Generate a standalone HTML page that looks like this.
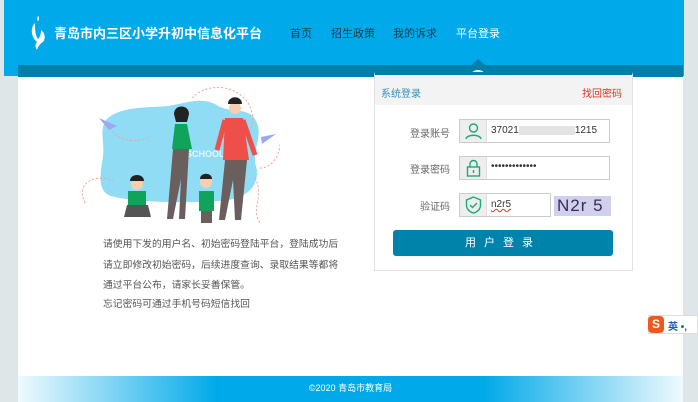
<!DOCTYPE html><html><head><meta charset="utf-8"><style>
*{margin:0;padding:0;box-sizing:border-box}
body{width:698px;height:402px;overflow:hidden;background:#dfe6e8;font-family:"Liberation Sans","Noto Sans CJK SC",sans-serif;position:relative}
.a{position:absolute}
.top{left:4px;top:0;width:680px;height:76px;background:#00a9e9}
.strip{left:18px;top:65px;width:665px;height:12px;background:#0080a8}
.main{left:18px;top:77px;width:665px;height:325px;background:#fff}
.nav{top:25px;font-size:11px;color:#1b3c4c}
.lb{font-size:10px;color:#666;width:60px;text-align:right;left:390px}
.inp{left:459px;height:24px;border:1px solid #ccc;background:#fff}
.ic{position:absolute;left:0;top:0;width:27px;height:22px;background:#eee;border-right:1px solid #e0e0e0}
.txt{font-size:9.8px;color:#555;left:103px;line-height:20px}
</style></head><body>
<div class="a top"></div>
<div class="a strip"></div>
<div class="a main"></div>
<svg class="a" style="left:30px;top:15px" width="16" height="36" viewBox="0 0 16 36"><path d="M8 1c-1 2-1 4 0 5c1-1 2-3 0-5z M5 8C0 13 1 22 7 27c-2 2-2 5 0 8c1-4 3-6 6-8c3-4 2-9-2-12c0 4-1 7-3 9c-3-4-3-10-3-16z" fill="#fff"/></svg>
<div class="a" style="left:54px;top:23px;font-size:13px;font-weight:bold;color:#fff">青岛市内三区小学升初中信息化平台</div>
<div class="a nav" style="left:290px">首页</div>
<div class="a nav" style="left:331px">招生政策</div>
<div class="a nav" style="left:393px">我的诉求</div>
<div class="a nav" style="left:456px;color:#fff">平台登录</div>
<div class="a" style="left:470px;top:59px;width:0;height:0;border-left:8px solid transparent;border-right:8px solid transparent;border-bottom:7px solid #0080a8"></div>
<div class="a" style="left:469px;top:70px;width:18px;height:14px;border-radius:9px 9px 0 0;background:#fff"></div>
<svg class="a" style="left:80px;top:78px" width="200" height="145" viewBox="0 0 200 145">
<path d="M28 40c15-12 40-10 60 -12c20-3 35-10 50 0c15 8 30 0 38 15c8 15 -5 30 0 45c5 20 -10 35 -40 35c-30 2 -80 2 -105 -5c-15-5 -10-25 -8-40c2-15 -5-28 5-38z" fill="#8fdcf4"/>
<text x="106" y="79" font-size="9" font-weight="bold" fill="#e6f7fd" font-family="Liberation Sans">SCHOOL</text>
<path d="M5 125c-10-20 10-30 28-22M112 20c20-20 55-10 60 15c3 15-5 25-15 30M175 100c10 20 -5 30 5 45M30 50c10 15 30 15 40 8M180 90c10 0 20-10 20-25" stroke="#f5a090" stroke-dasharray="2 2" fill="none"/>
<path d="M19 40l18 8l-8 4z M196 56l-14 10l-1-7z" fill="#9da8f2"/>
<g><path d="M95 46h12l5 25h-20z" fill="#10a35a"/><circle cx="102" cy="38" r="6" fill="#f6cfb0"/><path d="M94 36c0-10 15-10 15 0l-2 8h-11z" fill="#222"/><path d="M93 71h16l-4 70h-6l2-40l-8 40h-6z" fill="#6a5f5c"/></g>
<g><path d="M145 40h18l6 42h-26z" fill="#ef4f4a"/><path d="M145 42l-8 30M163 42l12 35" stroke="#ef4f4a" stroke-width="5"/><circle cx="155" cy="30" r="6" fill="#f6cfb0"/><path d="M148 26c0-9 14-9 14 0h-14z" fill="#222"/><path d="M145 82h22l-6 60h-6l-2-40l-8 40h-6z" fill="#6a5f5c"/></g>
<g><rect x="48" y="113" width="18" height="14" fill="#10a35a"/><circle cx="57" cy="106" r="6" fill="#f6cfb0"/><path d="M50 103c0-8 14-8 14 0z" fill="#222"/><path d="M47 127h21l3 12h-27z" fill="#555"/></g>
<g><rect x="119" y="113" width="15" height="20" fill="#10a35a"/><circle cx="126" cy="104" r="6" fill="#f6cfb0"/><path d="M120 101c0-7 12-7 12 0z" fill="#222"/><rect x="121" y="133" width="11" height="12" fill="#6a5f5c"/></g>
</svg>
<div class="a txt" style="top:235px">请使用下发的用户名、初始密码登陆平台，登陆成功后</div>
<div class="a txt" style="top:256px">请立即修改初始密码，后续进度查询、录取结果等都将</div>
<div class="a txt" style="top:276px">通过平台公布，请家长妥善保管。</div>
<div class="a txt" style="top:295px">忘记密码可通过手机号码短信找回</div>
<div class="a" style="left:374px;top:72px;width:259px;height:199px;border:1px solid #e3e3e3;border-top:3px solid #0080a8;background:#fff"></div>
<div class="a" style="left:375px;top:75px;width:257px;height:30px;background:#f3f3f3"></div>
<div class="a" style="left:381px;top:85px;font-size:10px;color:#3590b5">系统登录</div>
<div class="a" style="left:582px;top:85px;font-size:10px;color:#e0301e">找回密码</div>
<div class="a lb" style="top:125px">登录账号</div>
<div class="a lb" style="top:161px">登录密码</div>
<div class="a lb" style="top:198px">验证码</div>
<div class="a inp" style="top:119px;width:151px"><div class="ic"><svg width="27" height="22"><circle cx="13.5" cy="8" r="4" fill="none" stroke="#1fa97a" stroke-width="1.4"/><path d="M6 19c1-5 14-5 15 0" fill="none" stroke="#1fa97a" stroke-width="1.4"/></svg></div><span class="a" style="left:31px;top:5px;font-size:10px;color:#333">37021<span style="display:inline-block;width:56px;height:9px;background:#e4e4e4;vertical-align:middle"></span>1215</span></div>
<div class="a inp" style="top:156px;width:151px"><div class="ic"><svg width="27" height="22"><path d="M10 10V7a3.5 3.5 0 0 1 7 0v3" fill="none" stroke="#1fa97a" stroke-width="1.4"/><rect x="7.5" y="10" width="12" height="9" fill="none" stroke="#1fa97a" stroke-width="1.4"/><path d="M13.5 13v3" stroke="#1fa97a" stroke-width="1.4"/></svg></div><span class="a" style="left:31px;top:4px;font-size:10px;color:#333">•••••••••••••</span></div>
<div class="a inp" style="top:193px;width:92px"><div class="ic"><svg width="27" height="22"><path d="M13.5 3l7 3v5c0 4-3 7-7 8c-4-1-7-4-7-8V6z" fill="none" stroke="#1fa97a" stroke-width="1.4"/><path d="M10 11l2.5 2.5l4.5-4.5" fill="none" stroke="#1fa97a" stroke-width="1.4"/></svg></div><span class="a" style="left:31px;top:5px;font-size:10px;color:#333;text-decoration:underline wavy #e33">n2r5</span></div>
<div class="a" style="left:554px;top:196px;width:57px;height:20px;background:#cfd0ec;font-size:17px;color:#3a2a5a;line-height:20px;padding-left:3px;letter-spacing:1px">N2r 5</div>
<div class="a" style="left:393px;top:230px;width:220px;height:26px;background:#0083ab;border-radius:3px;color:#fff;font-size:11px;text-align:center;line-height:26px;letter-spacing:8px">用户登录</div>
<div class="a" style="left:18px;top:376px;width:665px;height:26px;background:linear-gradient(90deg,#f0fafe,#00a9e9 30%,#00a9e9 70%,#f0fafe);color:#fff;font-size:9px;text-align:center;line-height:24px">©2020 青岛市教育局</div>
<div class="a" style="left:648px;top:315px;width:50px;height:19px;background:#fff;border:1px solid #ddd"></div>
<div class="a" style="left:648px;top:316px;width:16px;height:17px;background:#f0591d;border-radius:4px;color:#fff;font-size:12px;font-weight:bold;text-align:center;line-height:17px">S</div>
<div class="a" style="left:668px;top:318px;font-size:10px;color:#1a5fb4;font-weight:bold">英 •,</div>
</body></html>
